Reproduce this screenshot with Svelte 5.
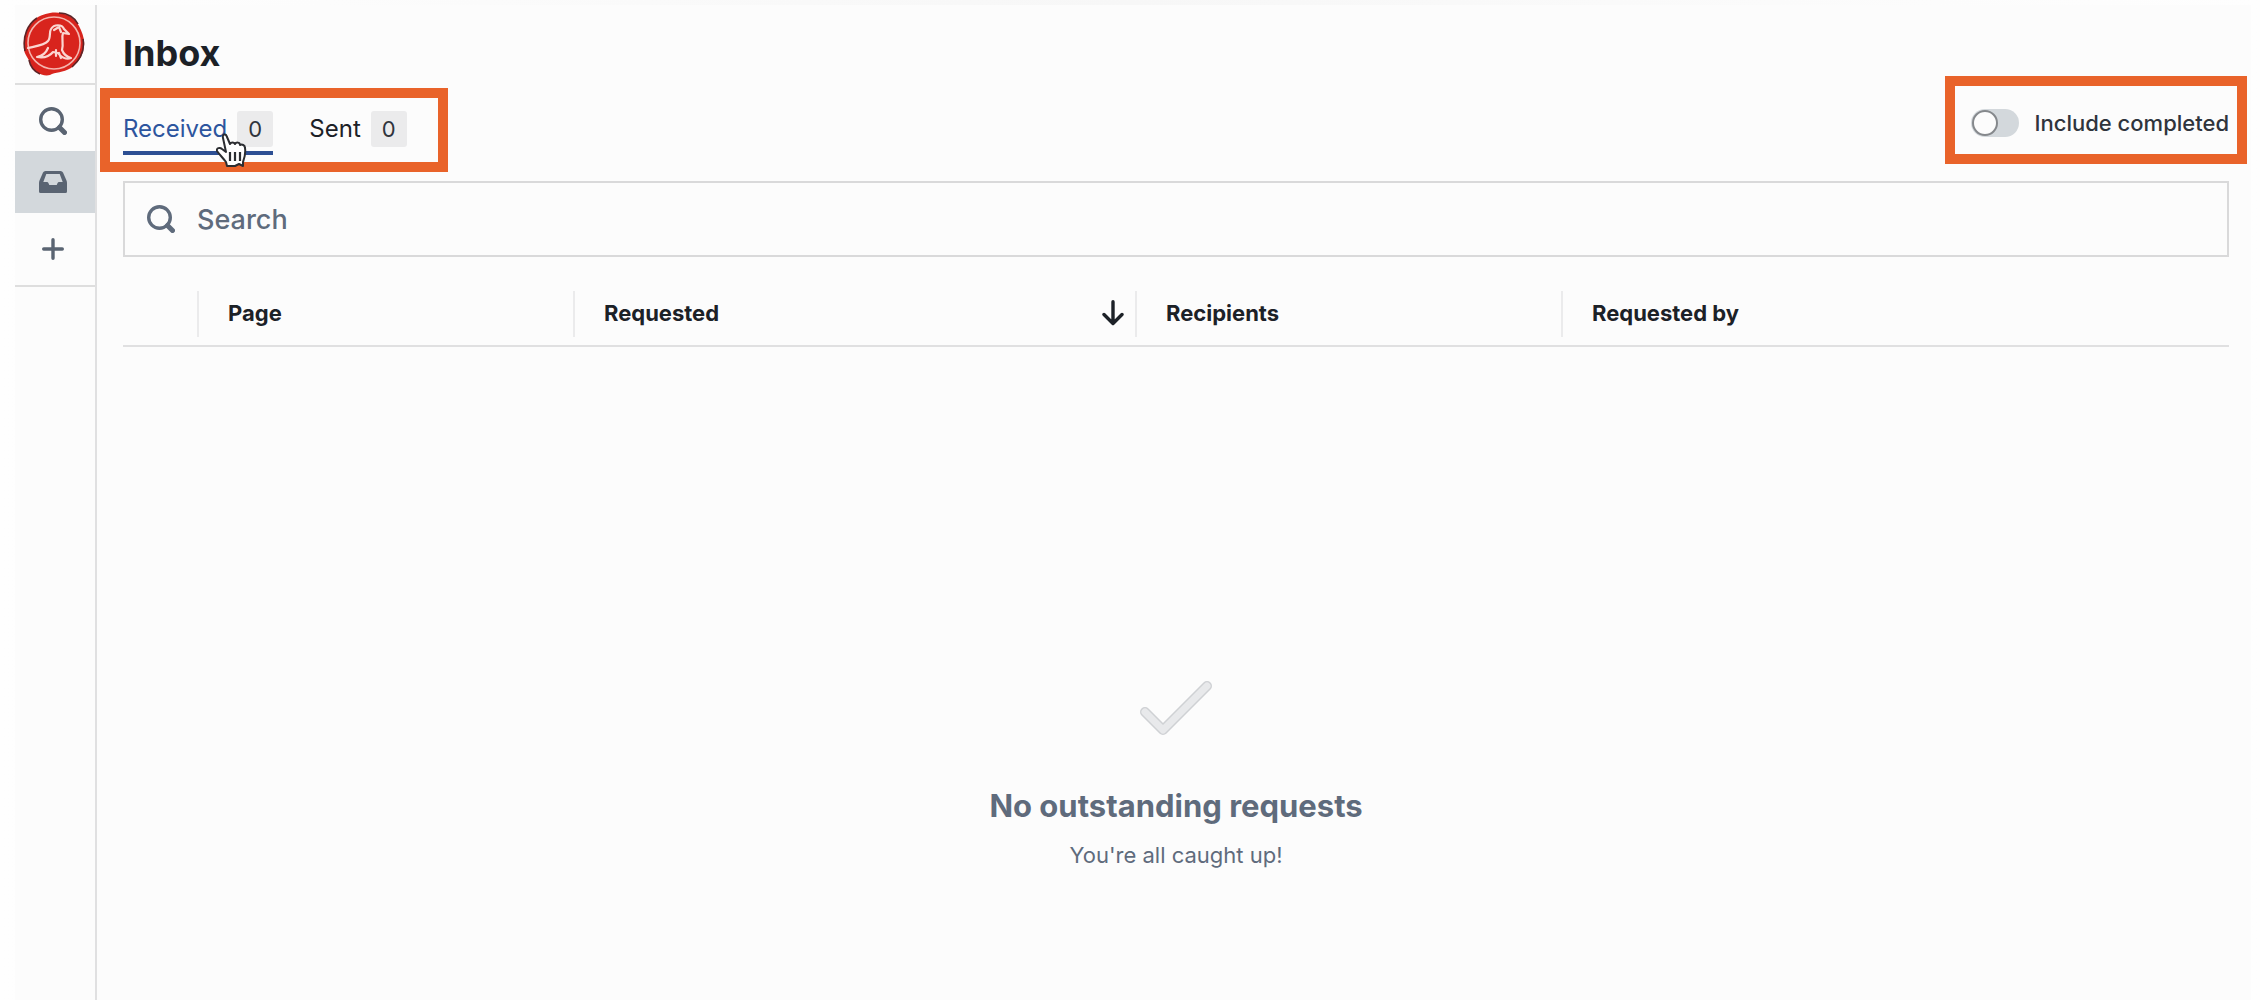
<script>
  let query = $state('');
  let includeCompleted = $state(false);
  let activeTab = $state('received');

  const tabs = [
    { id: 'received', label: 'Received', count: 0 },
    { id: 'sent', label: 'Sent', count: 0 }
  ];

  const columns = [
    { id: 'page', label: 'Page' },
    { id: 'requested', label: 'Requested', sorted: true },
    { id: 'recipients', label: 'Recipients' },
    { id: 'requested-by', label: 'Requested by' }
  ];
</script>

{#snippet searchIcon()}
  <svg class="search-icon" viewBox="0 0 28 28" fill="none" stroke="currentColor" aria-hidden="true">
    <circle cx="12.5" cy="12.5" r="10.8" stroke-width="3.4" />
    <path d="M20.5 20.5 L25.5 25.5" stroke-width="5" stroke-linecap="round" />
  </svg>
{/snippet}

<div class="app">
  <aside class="sidebar">
    <a class="logo" href="#home" aria-label="Home">
      <svg width="62" height="64" viewBox="0 0 62 64" fill="none">
        <path
          d="M27 1 C39 -1 51 4 56 14 C59 20 62 27 61 34 C60 44 55 51 48 56 C40 61 32 60 27 63 C19 65 10 59 8 53 C6 46 0 42 1 34 C0 25 4 15 10 9 C15 4 21 2 27 1 Z"
          fill="#d8241d"
        />
        <path d="M2 39 C-1 24 5 12 14 6 M17 62 C10 59 7 53 6 48 M36 1 C45 1 52 6 55 12 M60 27 C62 38 57 48 49 55" stroke="#5d2427" stroke-width="1.6" />
        <circle cx="31" cy="31" r="26" stroke="#f5b5ae" stroke-width="1.6" />
        <path
          d="M5 36 C14 34 22 33 25 29 C28 26 26 20 28 17 C31 12 39 12 41 17 L46 22 L40 21 C38 26 41 31 39 38 C41 43 44 45 48 46 C43 48 38 45 35 41 L30 40 C26 45 20 46 14 45 C20 44 23 41 25 36 M33 38 L33 44 M36 41 L38 46 M31 18 L36 15 L38 20"
          stroke="#fbd6d1"
          stroke-width="2.2"
          stroke-linejoin="round"
          stroke-linecap="round"
        />
      </svg>
    </a>

    <nav class="nav" aria-label="Main">
      <button class="nav-item search" aria-label="Search">
        {@render searchIcon()}
      </button>
      <button class="nav-item inbox" aria-label="Inbox" aria-current="page">
        <svg width="28" height="22" viewBox="0 0 28 22">
          <path
            fill="currentColor"
            fill-rule="evenodd"
            d="M6.500 0 H21.500 Q23.300 0 24 1.600 L27.500 9.500 Q28 10.600 28 12 V20.500 Q28 22 26.500 22 H1.500 Q0 22 0 20.500 V12 Q0 10.600 0.500 9.500 L4 1.600 Q4.700 0 6.500 0 Z M7.300 3 L4.300 11 H8 Q9 11 9.400 12 L10.300 14 H17.700 L18.600 12 Q19 11 20 11 H23.700 L20.700 3 Z"
          />
        </svg>
      </button>
      <button class="nav-item add" aria-label="New">
        <svg width="22" height="22" viewBox="0 0 22 22" fill="none" stroke="currentColor" stroke-width="3.4" stroke-linecap="round">
          <path d="M11 1.700 V20.300 M1.700 11 H20.300" />
        </svg>
      </button>
    </nav>
  </aside>

  <main class="main">
    <h1>Inbox</h1>

    <div class="toolbar">
      <div class="tabs" role="tablist">
        {#each tabs as tab (tab.id)}
          <button
            class="tab"
            class:active={activeTab === tab.id}
            role="tab"
            aria-selected={activeTab === tab.id}
            onclick={() => (activeTab = tab.id)}
          >
            {tab.label}
            <span class="count">{tab.count}</span>
          </button>
        {/each}

        <!-- Hand pointer over the first tab -->
        <svg class="pointer" width="32" height="34" viewBox="0 0 32 34" aria-hidden="true">
          <path
            d="M11 33 L10 29 C7 25 3 21 1 18 C0 15 4 14 6 16 L10 19 L7 5 C6 1 10 0 11 4 L14 11 C15 9 18 9 19 11 C20 9 24 9 24 12 C26 11 29 12 29 15 C30 21 28 26 27 29 L27 33 L23 31 L19 33 Z"
            fill="#fff"
            stroke="#2b2d31"
            stroke-width="2"
            stroke-linejoin="round"
          />
          <path d="M14 19 V28 M19 19 V28 M24 19 V28" stroke="#2b2d31" stroke-width="2.2" />
        </svg>
      </div>

      <label class="toggle">
        <input type="checkbox" bind:checked={includeCompleted} />
        <span>Include completed</span>
      </label>
    </div>

    <label class="search-box">
      {@render searchIcon()}
      <input type="text" placeholder="Search" aria-label="Search requests" bind:value={query} />
    </label>

    <table>
      <thead>
        <tr>
          <th class="col-select" aria-label="Select"></th>
          {#each columns as column (column.id)}
            <th class={column.id} scope="col">
              <div class="heading">
                {column.label}
                {#if column.sorted}
                  <svg width="22" height="26" viewBox="0 0 22 26" fill="none" stroke="currentColor" stroke-width="3.4" stroke-linecap="round" stroke-linejoin="round">
                    <path d="M11 1.700 V23 M2 14.500 L11 23.500 L20 14.500" />
                  </svg>
                {/if}
              </div>
            </th>
          {/each}
        </tr>
      </thead>
    </table>

    <section class="empty">
      <svg width="72" height="54" viewBox="0 0 72 54" fill="none" stroke-linecap="round" stroke-linejoin="round">
        <path d="M5 31 L23 49 L67 5" stroke="#cfd1d4" stroke-width="10" />
        <path d="M5 31 L23 49 L67 5" stroke="#e8e9eb" stroke-width="7" />
      </svg>
      <h2>No outstanding requests</h2>
      <p>You're all caught up!</p>
    </section>
  </main>
</div>

<style>
  :global(body) {
    margin: 0;
    background: #fefefe;
  }

  .app {
    box-sizing: border-box;
    display: flex;
    min-height: 100vh;
    padding: 5px 9px 0 15px;
    background: linear-gradient(90deg, #fefefe, #f7f7f7 50%, #fefefe);
    font-family: Inter, 'Liberation Sans', sans-serif;
    color: #1c2127;
  }

  button {
    margin: 0;
    padding: 0;
    border: 0;
    background: none;
    font: inherit;
    color: inherit;
    cursor: pointer;
  }

  svg {
    display: block;
    flex: none;
  }

  .search-icon {
    width: 28px;
    height: 28px;
  }

  /* Sidebar */
  .sidebar {
    flex: none;
    width: 80px;
    border-right: 2px solid #e0e0e1;
    background: #fcfcfc;
    color: #5a6472;
  }

  .logo {
    display: flex;
    align-items: center;
    justify-content: center;
    height: 78px;
    padding-right: 2px;
    border-bottom: 2px solid #dedede;
  }

  .nav {
    display: flex;
    flex-direction: column;
    border-bottom: 2px solid #dedede;
  }

  .nav-item {
    display: flex;
    align-items: center;
    justify-content: center;
    height: 72px;
    padding-right: 4px;
  }

  .nav-item.search {
    height: 66px;
    padding-top: 6px;
  }

  .nav-item.inbox {
    height: 62px;
    background: #d3d8dc;
  }

  /* Main column */
  .main {
    flex: 1;
    min-width: 0;
    padding: 24px 22px 0 26px;
    background: #fcfcfc;
  }

  h1 {
    margin: 0;
    font-size: 36px;
    font-weight: 700;
    line-height: 48px;
  }

  .toolbar {
    display: flex;
    justify-content: space-between;
    margin: 20px 0 26px;
  }

  .tabs {
    position: relative;
    display: flex;
    align-items: flex-end;
    gap: 36px;
    height: 58px;
  }

  .tab {
    display: flex;
    align-items: center;
    gap: 10px;
    padding-bottom: 4px;
    border-bottom: 4px solid transparent;
    font-size: 24px;
    line-height: 36px;
  }

  .tab.active {
    border-color: #2d4f93;
    color: #2d559e;
  }

  .count {
    width: 36px;
    border-radius: 3px;
    background: #ebebec;
    font-size: 22px;
    text-align: center;
    color: #2f343c;
  }

  .pointer {
    position: absolute;
    z-index: 1;
    top: 36px;
    left: 93px;
  }

  .toggle {
    position: relative;
    display: flex;
    align-items: center;
    gap: 16px;
    height: 52px;
    font-size: 22px;
    font-weight: 500;
    color: #2f343c;
  }

  /* Callout frames */
  .tabs::after,
  .toggle::after {
    content: '';
    position: absolute;
    border: 10px solid #e9632a;
    pointer-events: none;
  }

  .tabs::after {
    inset: -9px -41px -17px -23px;
  }

  .toggle::after {
    inset: -21px -18px -15px -26px;
  }

  .toggle input {
    appearance: none;
    width: 48px;
    height: 28px;
    margin: 0;
    border-radius: 14px;
    background: #d3d8dc;
  }

  .toggle input::before {
    content: '';
    display: block;
    box-sizing: border-box;
    width: 26px;
    height: 26px;
    margin: 1px;
    border: 2px solid #85888c;
    border-radius: 50%;
    background: #fcfcfc;
  }

  .toggle input:checked {
    background: #2d559e;
  }

  .toggle input:checked::before {
    margin-left: 21px;
  }

  .search-box {
    display: flex;
    align-items: center;
    gap: 22px;
    height: 72px;
    padding: 0 22px;
    border: 2px solid #d9d9da;
    color: #5f6b7c;
  }

  .search-box input {
    flex: 1;
    min-width: 0;
    padding: 0;
    border: 0;
    outline: 0;
    background: none;
    font: inherit;
    font-size: 27px;
    font-weight: 500;
    color: #1c2127;
  }

  .search-box input::placeholder {
    color: #5f6b7c;
    opacity: 1;
  }

  /* Request table */
  table {
    width: 100%;
    margin-top: 34px;
    border-spacing: 0;
    table-layout: fixed;
    border-bottom: 2px solid #e0e0e1;
  }

  th {
    padding: 0 0 8px;
    font-size: 22px;
    font-weight: 700;
    text-align: left;
  }

  .heading {
    display: flex;
    align-items: center;
    justify-content: space-between;
    height: 44px;
    padding: 0 11px 2px 29px;
    border-left: 2px solid #ebebec;
  }

  .col-select {
    width: 74px;
  }

  .page {
    width: 376px;
  }

  .requested {
    width: 562px;
  }

  .recipients {
    width: 426px;
  }

  /* Empty state */
  .empty {
    display: flex;
    flex-direction: column;
    align-items: center;
    padding-top: 334px;
    text-align: center;
    color: #5f6b7c;
  }

  h2 {
    margin: 51px 0 13px;
    font-size: 31px;
    font-weight: 700;
    line-height: 40px;
  }

  .empty p {
    margin: 0;
    font-size: 22px;
    line-height: 32px;
  }
</style>
